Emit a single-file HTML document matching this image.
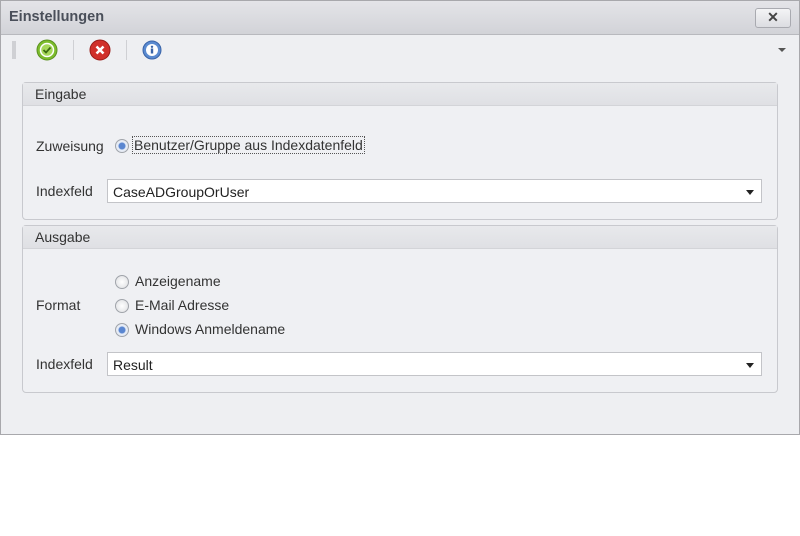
<!DOCTYPE html>
<html><head><style>
body{margin:0;width:800px;height:536px;background:#fff;font-family:"Liberation Sans",sans-serif;font-size:14px;color:#222;position:relative;overflow:hidden}
.win{position:absolute;left:0;top:0;width:798px;height:433px;border:1px solid #a8a8ac;background:#eeeff2}
.title{position:absolute;left:0;top:0;right:0;height:33px;background:linear-gradient(#e4e4e8,#d2d3d8);border-bottom:1px solid #b8b9be}
.title span{position:absolute;left:8px;top:8px;font-weight:bold;font-size:14.5px;color:#4a4f5a}
.close{position:absolute;right:8px;top:7px;width:34px;height:18px;border:1px solid #a9aab0;border-radius:3px;background:linear-gradient(#f4f4f6,#dcdde1);text-align:center;font-weight:bold;font-size:14px;line-height:17px;color:#444}
.grp{position:absolute;left:22px;width:754px;border:1px solid #c8c9ce;border-radius:4px;background:#eff0f3}
.gh{height:22px;background:linear-gradient(#e8e9ec,#dfe0e4);border-bottom:1px solid #d3d4d8;padding-left:12px;line-height:22px;color:#333}
.lbl{position:absolute;color:#333}
.inp{position:absolute;left:107px;width:655px;height:24px;background:#fff;border:1px solid #c3c4c8;line-height:24px;padding-left:5px;box-sizing:border-box}
.inp:after{content:"";position:absolute;right:7px;top:10px;border-left:4px solid transparent;border-right:4px solid transparent;border-top:5px solid #222}
.rad{position:absolute;width:12px;height:12px;border-radius:50%;border:1px solid #a0a4aa;background:radial-gradient(#fff,#dcdde0)}
.rad.on{background:radial-gradient(#5a86d0 0,#5a86d0 3px,#e8eef8 4px,#dfe3ea)}
.sep{position:absolute;top:40px;width:1px;height:20px;background:#cfd0d4}
</style></head><body>
<div class="win">
<div class="title"><span>Einstellungen</span><div class="close">✕</div></div>
</div>
<div style="position:absolute;left:12px;top:41px;width:4px;height:18px;background:#cfd0d4"></div>
<svg style="position:absolute;left:36px;top:39px" width="22" height="22"><circle cx="11" cy="11" r="10" fill="#7cbc2c" stroke="#5a9020"/><circle cx="11" cy="11" r="6.5" fill="#a7d85a" stroke="#fff" stroke-width="1.5"/><path d="M7.5 11l2.5 2.5 4.5-5" stroke="#3a6a10" stroke-width="1.8" fill="none"/></svg>
<div class="sep" style="left:73px"></div>
<svg style="position:absolute;left:89px;top:39px" width="22" height="22"><circle cx="11" cy="11" r="10" fill="#d0302a" stroke="#9a1c18"/><path d="M7.5 7.5l7 7M14.5 7.5l-7 7" stroke="#fff" stroke-width="2.6"/></svg>
<div class="sep" style="left:126px"></div>
<svg style="position:absolute;left:142px;top:40px" width="20" height="20"><circle cx="10" cy="10" r="9" fill="#5a8ad0" stroke="#3a64a8"/><circle cx="10" cy="10" r="6" fill="#fff"/><rect x="8.8" y="8.5" width="2.4" height="5" fill="#3a64a8"/><circle cx="10" cy="6.8" r="1.2" fill="#3a64a8"/></svg>
<div style="position:absolute;left:778px;top:48px;border-left:4px solid transparent;border-right:4px solid transparent;border-top:4px solid #555"></div>

<div class="grp" style="top:82px;height:136px"><div class="gh">Eingabe</div></div>
<div class="lbl" style="left:36px;top:138px">Zuweisung</div>
<div class="rad on" style="left:115px;top:139px"></div>
<div class="lbl" style="left:132px;top:136px;border:1px dotted #555;padding:0 1px">Benutzer/Gruppe aus Indexdatenfeld</div>
<div class="lbl" style="left:36px;top:183px">Indexfeld</div>
<div class="inp" style="top:179px">CaseADGroupOrUser</div>

<div class="grp" style="top:225px;height:166px"><div class="gh">Ausgabe</div></div>
<div class="rad" style="left:115px;top:275px"></div><div class="lbl" style="left:135px;top:273px">Anzeigename</div>
<div class="rad" style="left:115px;top:299px"></div><div class="lbl" style="left:135px;top:297px">E-Mail Adresse</div>
<div class="rad on" style="left:115px;top:323px"></div><div class="lbl" style="left:135px;top:321px">Windows Anmeldename</div>
<div class="lbl" style="left:36px;top:297px">Format</div>
<div class="lbl" style="left:36px;top:356px">Indexfeld</div>
<div class="inp" style="top:352px">Result</div>
</body></html>
